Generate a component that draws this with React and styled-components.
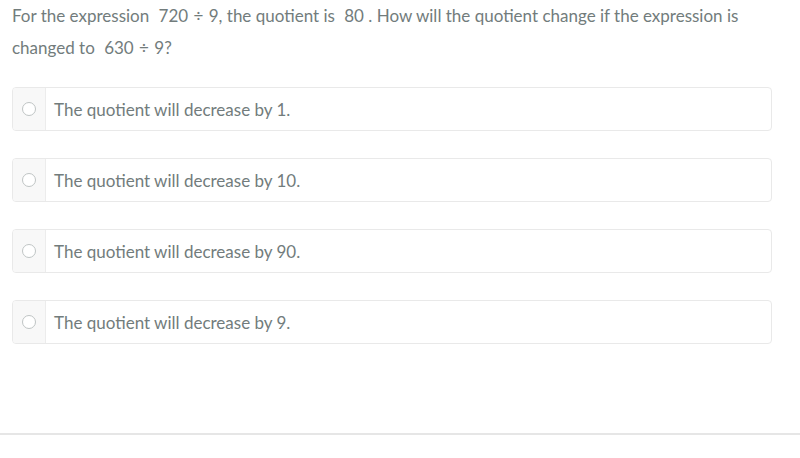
import React from 'react';
import styled, { createGlobalStyle } from 'styled-components';

const GlobalStyle = createGlobalStyle`
  html, body {
    margin: 0;
    padding: 0;
    background: #ffffff;
  }
  body {
    font-family: Lato, "Open Sans", sans-serif;
  }
`;

const Page = styled.div`
  width: 800px;
  height: 458px;
  display: flex;
  flex-direction: column;
  box-sizing: border-box;
`;

const Question = styled.p`
  margin: 0;
  padding: 0 12px;
  font-size: 17px;
  line-height: 32px;
  color: #727c7c;
`;

const MathSpan = styled.span`
  display: inline-block;
  margin-left: 5px;
  word-spacing: 1px;
`;

const Options = styled.div`
  display: flex;
  flex-direction: column;
  gap: 27px;
  padding: 23px 28px 0 12px;
`;

const Option = styled.label`
  display: flex;
  height: 44px;
  border: 1px solid #e9e9e9;
  border-radius: 4px;
  box-sizing: border-box;
  overflow: hidden;
  cursor: pointer;
`;

const RadioCell = styled.div`
  width: 32px;
  flex-shrink: 0;
  display: flex;
  align-items: center;
  justify-content: center;
  background: #f8f8f8;
  border-right: 1px solid #ececec;
`;

const Radio = styled.span`
  width: 14px;
  height: 14px;
  border-radius: 50%;
  border: 1px solid #bfc4c4;
  background: #ffffff;
  box-sizing: border-box;
`;

const OptionText = styled.span`
  display: flex;
  align-items: center;
  padding-left: 8px;
  font-size: 17px;
  color: #727c7c;
`;

const Spacer = styled.div`
  flex: 1;
`;

const Footer = styled.div`
  height: 2px;
  background: #e6e6e6;
  margin-bottom: 23px;
`;

const answers = [
  'The quotient will decrease by 1.',
  'The quotient will decrease by 10.',
  'The quotient will decrease by 90.',
  'The quotient will decrease by 9.',
];

const App = () => (
  <Page>
    <GlobalStyle />
    <Question>
      For the expression <MathSpan>720 ÷ 9</MathSpan>, the quotient is <MathSpan>80</MathSpan> . How will the quotient change if the expression is changed to <MathSpan>630 ÷ 9</MathSpan>?
    </Question>
    <Options>
      {answers.map((a) => (
        <Option key={a}>
          <RadioCell>
            <Radio />
          </RadioCell>
          <OptionText>{a}</OptionText>
        </Option>
      ))}
    </Options>
    <Spacer />
    <Footer />
  </Page>
);

export default App;
